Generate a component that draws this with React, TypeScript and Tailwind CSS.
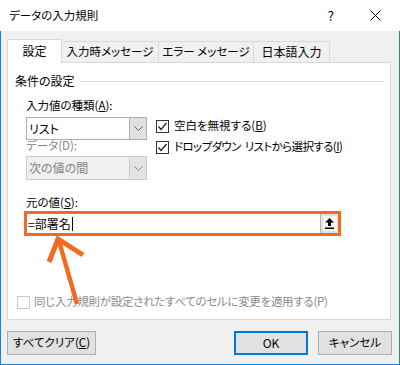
import React from "react";

const font = {
  fontFamily: '"Noto Sans CJK JP", "Noto Sans", sans-serif',
};

const Chevron = ({ color = "#606060" }: { color?: string }) => (
  <svg width="9" height="5" viewBox="0 0 9 5">
    <polyline points="0.5,0.5 4.5,4.5 8.5,0.5" fill="none" stroke={color} strokeWidth="1" />
  </svg>
);

const Check = ({ disabled, checked }: { disabled?: boolean; checked?: boolean }) => (
  <div
    className={`w-[13px] h-[13px] border bg-white flex items-center justify-center shrink-0 ${
      disabled ? "border-[#c8c8c8]" : "border-[#333333]"
    }`}
  >
    {checked && (
      <svg width="11" height="11" viewBox="0 0 11 11">
        <polyline points="1.5,5.5 4,8.5 9.5,2" fill="none" stroke="#202020" strokeWidth="1.3" />
      </svg>
    )}
  </div>
);

const Select = ({ value, disabled }: { value: string; disabled?: boolean }) => (
  <div
    className={`flex h-full border ${
      disabled ? "border-[#cccccc] bg-[#f0f0f0] text-[#838383]" : "border-[#adadad] bg-white text-black"
    }`}
  >
    <div className="flex-1 flex items-center pl-[2px] text-[12px]">{value}</div>
    <div
      className={`w-[17px] flex items-center justify-center border-l ${
        disabled ? "border-[#cccccc] bg-[#e3e3e3]" : "border-[#adadad] bg-[#e1e1e1]"
      }`}
    >
      <Chevron color={disabled ? "#8a8a8a" : "#606060"} />
    </div>
  </div>
);

export default function App() {
  return (
    <div
      className="relative w-[400px] h-[365px] text-[11.5px] text-black [font-feature-settings:'palt']"
      style={font}
    >
      {/* Title bar */}
      <div className="h-[31px] bg-white flex items-center">
        <span className="ml-[9px]">データの入力規則</span>
        <span className="ml-auto mr-[36px] text-[13px]">?</span>
        <svg width="11" height="11" viewBox="0 0 11 11" className="mr-[19px]">
          <line x1="0.5" y1="0.5" x2="10.5" y2="10.5" stroke="#000" strokeWidth="1" />
          <line x1="10.5" y1="0.5" x2="0.5" y2="10.5" stroke="#000" strokeWidth="1" />
        </svg>
      </div>

      {/* Body */}
      <div className="h-[334px] bg-[#f0f0f0] border-x border-b border-[#1883d7]">
        {/* Tabs */}
        <div className="pl-[6px] pt-[8px] flex items-end h-[31px] text-[12px]">
          <div className="relative z-10 w-[55px] h-[24px] -mb-px bg-white border-x border-t border-[#d9d9d9] flex items-center justify-center pb-[1px]">
            設定
          </div>
          <div className="w-[97px] h-[21px] border-t border-r border-[#d9d9d9] flex items-center justify-center text-[11.5px]">
            入力時メッセージ
          </div>
          <div className="w-[95px] h-[21px] border-t border-r border-[#d9d9d9] flex items-center justify-center text-[11.5px]">
            エラー メッセージ
          </div>
          <div className="w-[76px] h-[21px] border-t border-r border-[#d9d9d9] flex items-center justify-center">
            日本語入力
          </div>
        </div>

        {/* Panel */}
        <div className="ml-[6px] w-[384px] h-[258px] bg-white border border-[#d9d9d9]">
          <div className="mt-[10px] h-[16px] flex items-center pl-[7px]">
            <span className="leading-[16px] text-[12px]">条件の設定</span>
            <div className="flex-1 h-px bg-[#dcdcdc] ml-[5px] mr-[6px]" />
          </div>

          <div className="pl-[18px]">
            <div className="flex">
              <div className="w-[121px]">
                <div className="mt-[8px] leading-[16px]">
                  入力値の種類(<span className="underline">A</span>):
                </div>
                <div className="mt-[4px] h-[23px]">
                  <Select value="リスト" />
                </div>
                <div className="-mt-[1px] leading-[12px] h-[12px] text-[#838383]">データ(D):</div>
                <div className="mt-[5px] h-[24px]">
                  <Select value="次の値の間" disabled />
                </div>
              </div>
              <div className="ml-[9px]">
                <div className="mt-[29px] h-[16px] flex items-center gap-[5px]">
                  <Check checked />
                  <span>
                    空白を無視する(<span className="underline">B</span>)
                  </span>
                </div>
                <div className="mt-[5px] h-[16px] flex items-center gap-[5px] tracking-[-0.6px]">
                  <Check checked />
                  <span>
                    ドロップダウン<span className="ml-[4px]">リストから選択する(</span>
                    <span className="underline">I</span>)
                  </span>
                </div>
              </div>
            </div>

            <div className="mt-[14px] leading-[16px]">
              元の値(<span className="underline">S</span>):
            </div>
            <div className="mt-[1px] -ml-[2px] w-[317px] h-[25px] border-[3px] border-[#f26a1f] bg-white flex">
              <div className="flex-1 flex items-center pl-[1px] text-[12px]">
                <span>=部署名</span>
                <span className="w-px h-[14px] bg-black ml-[1px]" />
              </div>
              <div className="w-[18px] h-full bg-[#e1e1e1] border-l border-[#b4b4b4] flex items-center justify-center">
                <div className="w-[14px] h-[15px] bg-[#f4f4f4] flex items-center justify-center">
                  <svg width="9" height="11" viewBox="0 0 9 11">
                    <polygon points="4.5,0 9,4.5 6,4.5 6,8 3,8 3,4.5 0,4.5" fill="#000" />
                    <rect x="0" y="9.5" width="9" height="1.5" fill="#000" />
                  </svg>
                </div>
              </div>
            </div>
          </div>

          <div className="mt-[58px] pl-[9px] h-[16px] flex items-center gap-[4px] text-[#8c8c8c] tracking-[-0.3px]">
            <Check disabled />
            <span>同じ入力規則が設定されたすべてのセルに変更を適用する(P)</span>
          </div>
        </div>

        {/* Buttons */}
        <div className="mt-[11px] flex h-[24px] pl-[6px]">
          <div className="w-[89px] h-full bg-[#e1e1e1] border border-[#adadad] flex items-center justify-center">
            すべてクリア(<span className="underline">C</span>)
          </div>
          <div className="ml-[138px] w-[74px] h-full bg-[#e1e1e1] border-2 border-[#0078d7] flex items-center justify-center text-[12px]">
            OK
          </div>
          <div className="ml-[10px] w-[74px] h-full bg-[#e1e1e1] border border-[#adadad] flex items-center justify-center">
            キャンセル
          </div>
        </div>
      </div>

      {/* Annotation arrow */}
      <svg className="absolute left-0 top-0 pointer-events-none" width="400" height="365" viewBox="0 0 400 365">
        <line x1="77" y1="304" x2="59" y2="241" stroke="#f26a1f" strokeWidth="4.5" />
        <polyline
          points="49,262 58,239 83,255"
          fill="none"
          stroke="#f26a1f"
          strokeWidth="5"
          strokeLinejoin="miter"
        />
      </svg>
    </div>
  );
}
